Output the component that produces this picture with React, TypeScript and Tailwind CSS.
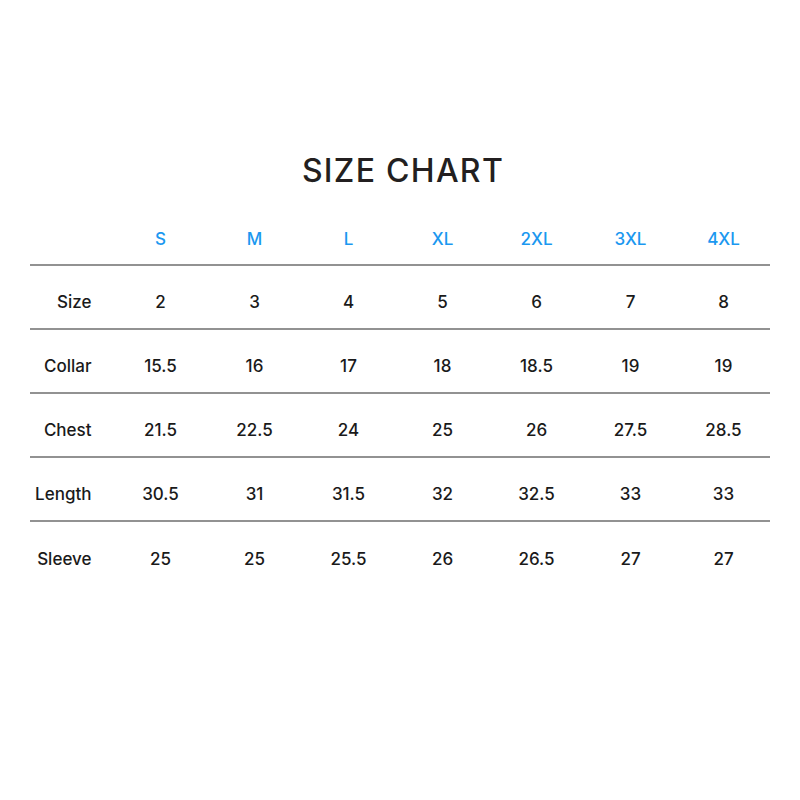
import React from 'react';

const sizes = ['S', 'M', 'L', 'XL', '2XL', '3XL', '4XL'];

const rows: { label: string; values: string[] }[] = [
  { label: 'Size', values: ['2', '3', '4', '5', '6', '7', '8'] },
  { label: 'Collar', values: ['15.5', '16', '17', '18', '18.5', '19', '19'] },
  { label: 'Chest', values: ['21.5', '22.5', '24', '25', '26', '27.5', '28.5'] },
  { label: 'Length', values: ['30.5', '31', '31.5', '32', '32.5', '33', '33'] },
  { label: 'Sleeve', values: ['25', '25', '25.5', '26', '26.5', '27', '27'] },
];

export default function App() {
  return (
    <div
      className="w-[800px] h-[800px] bg-white flex flex-col items-center"
      style={{ fontFamily: 'Inter, "Open Sans", sans-serif' }}
    >
      <h1 className="mt-[153px] text-[32px] leading-[36px] font-medium tracking-[0.04em] text-[#231f20] ml-[6px]">
        SIZE CHART
      </h1>

      <div className="mt-[21px] w-[740px] ml-[-1px] text-[17px] font-medium text-[#1a1a1a]">
        <div className="grid grid-cols-[84px_repeat(6,94px)_1fr] h-[56px] pt-[6px] items-center border-b-2 border-[#929292]">
          <div />
          {sizes.map((s) => (
            <div key={s} className="text-center text-[#1b98f0]">
              {s}
            </div>
          ))}
        </div>

        {rows.map((row, i) => (
          <div
            key={row.label}
            className={
              'grid grid-cols-[84px_repeat(6,94px)_1fr] h-[64px] pt-[12px] items-center' +
              (i < rows.length - 1 ? ' border-b-2 border-[#929292]' : '')
            }
          >
            <div className="text-right pr-[22px]">{row.label}</div>
            {row.values.map((v, j) => (
              <div key={j} className="text-center">
                {v}
              </div>
            ))}
          </div>
        ))}
      </div>
    </div>
  );
}
